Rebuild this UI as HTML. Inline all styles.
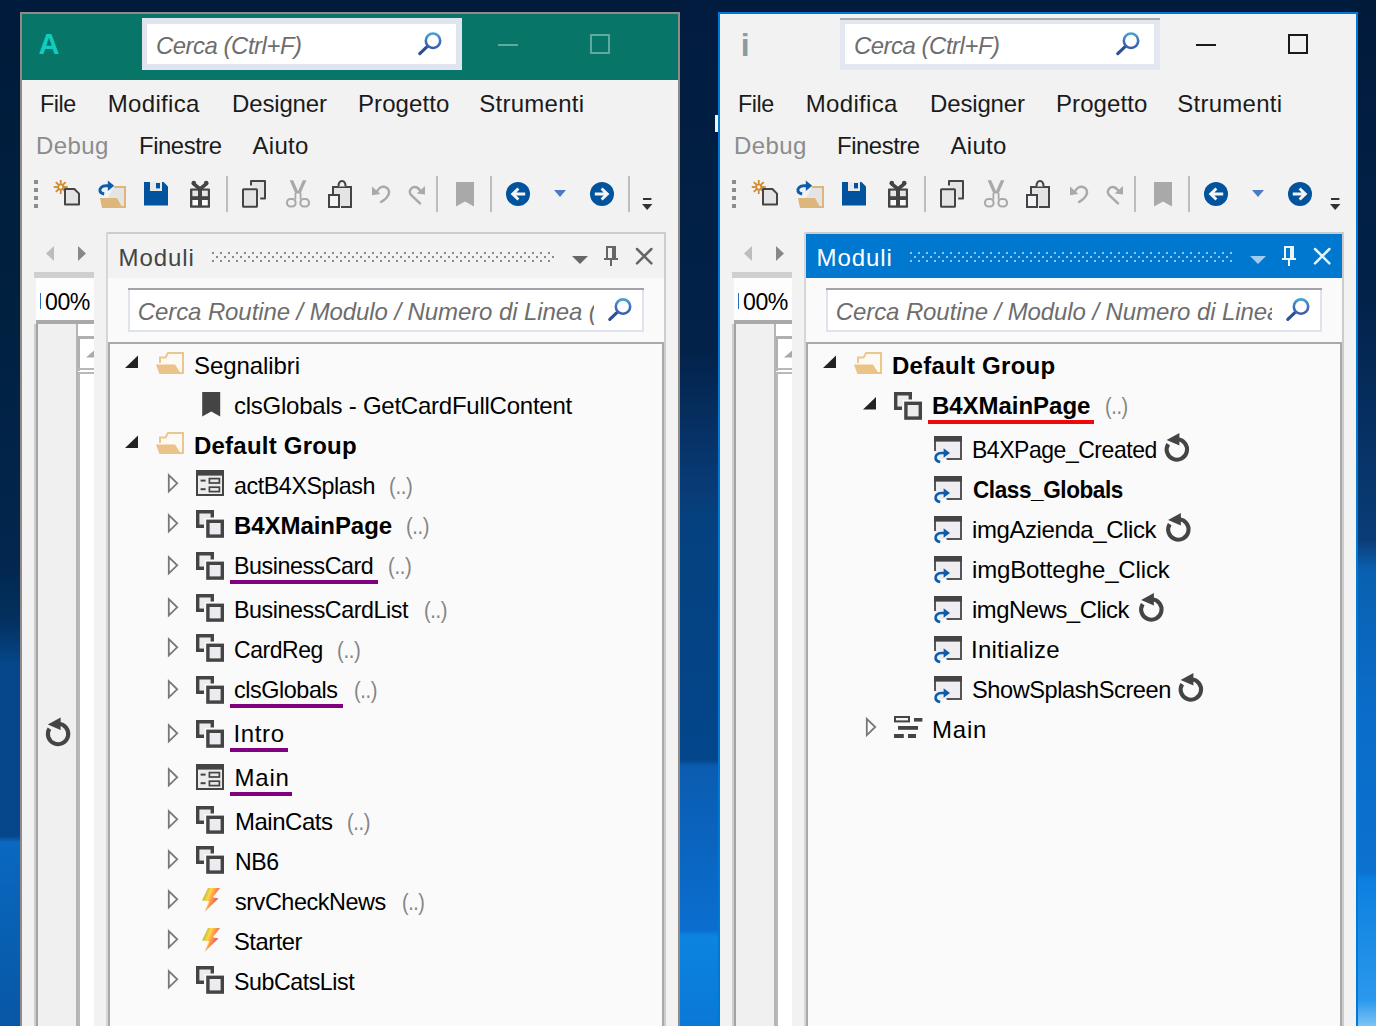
<!DOCTYPE html>
<html><head><meta charset="utf-8"><title>Moduli</title><style>
html,body{margin:0;padding:0}
body{width:1376px;height:1026px;overflow:hidden;position:relative;background:
 linear-gradient(180deg,#001b3b 0,#00203f 300px,#02264e 560px,#03305f 620px,#05478a 664px,#05478a 836px,#0a68c0 842px,#0757a5 1026px) 0 0/20px 1026px no-repeat,
 linear-gradient(180deg,#011c3e 0,#02224a 350px,#083a74 480px,#05417f 520px,#03468b 760px,#0a5cb0 766px,#0a6ed0 930px,#0c84e0 936px,#0a78d8 1026px) 680px 0/38px 1026px no-repeat,
 linear-gradient(180deg,#011a3a 0,#02224a 300px,#0a3d78 540px,#0a60b0 570px,#0a6cc8 700px,#0a72d0 872px,#0c80e0 880px,#2a98ec 1000px,#7cc4f6 1026px) 1358px 0/18px 1026px no-repeat,
 #011b3c;font-family:"Liberation Sans", sans-serif;font-size:24px}
#b div{position:absolute}
.t{position:absolute;white-space:pre;line-height:1;transform-origin:0 0}
svg{position:absolute;overflow:visible}
</style></head>
<body>
<div id="b">
<div style="left:715px;top:115px;width:3px;height:17px;background:#eef6ea;"></div>
<div style="left:20px;top:12px;width:660px;height:1014px;background:#f2f2f2;"></div>
<div style="left:20px;top:12px;width:660px;height:68px;background:#077567;"></div>
<div style="left:20px;top:12px;width:660px;height:2px;background:#918a88;"></div>
<div style="left:20px;top:12px;width:2px;height:1014px;background:#918a88;"></div>
<div style="left:678px;top:12px;width:2px;height:1014px;background:#918a88;"></div>
<div style="left:142px;top:18px;width:320px;height:52px;background:#e0e4ee;"></div>
<div style="left:147px;top:24px;width:309px;height:40px;background:#fff;"></div>
<div style="left:498px;top:44px;width:20px;height:2px;background:#5fa99f;"></div>
<div style="left:590px;top:34px;width:20px;height:20px;background:transparent;border:2px solid #5fa99f;box-sizing:border-box;"></div>
<div style="left:34px;top:180px;width:4px;height:4px;background:#8c8c8c;"></div>
<div style="left:34px;top:188px;width:4px;height:4px;background:#8c8c8c;"></div>
<div style="left:34px;top:196px;width:4px;height:4px;background:#8c8c8c;"></div>
<div style="left:34px;top:204px;width:4px;height:4px;background:#8c8c8c;"></div>
<div style="left:226px;top:176px;width:2px;height:36px;background:#bdbdbd;"></div>
<div style="left:436px;top:176px;width:2px;height:36px;background:#bdbdbd;"></div>
<div style="left:490px;top:176px;width:2px;height:36px;background:#bdbdbd;"></div>
<div style="left:628px;top:176px;width:2px;height:36px;background:#bdbdbd;"></div>
<div style="left:34px;top:272px;width:60px;height:6px;background:#cfcfcf;"></div>
<div style="left:36px;top:278px;width:58px;height:42px;background:#fdfdfd;"></div>
<div style="left:40px;top:293px;width:1px;height:16px;background:#2a6fc0;"></div>
<div style="left:36px;top:320px;width:58px;height:4px;background:#a9a9a9;"></div>
<div style="left:34px;top:324px;width:2px;height:702px;background:#cdcdcd;"></div>
<div style="left:36px;top:324px;width:2px;height:702px;background:#a3a3a3;"></div>
<div style="left:38px;top:324px;width:40px;height:702px;background:#f0f0f0;"></div>
<div style="left:76px;top:324px;width:2px;height:702px;background:#b5b5b5;"></div>
<div style="left:78px;top:324px;width:16px;height:702px;background:#fff;"></div>
<div style="left:78px;top:336px;width:16px;height:3px;background:#b0b0b0;"></div>
<div style="left:78px;top:339px;width:2px;height:32px;background:#b0b0b0;"></div>
<div style="left:78px;top:368px;width:16px;height:2px;background:#b8b8b8;"></div>
<div style="left:78px;top:372px;width:16px;height:2px;background:#b8b8b8;"></div>
<div style="left:78px;top:374px;width:2px;height:652px;background:#b8b8b8;"></div>
<div style="left:106px;top:232px;width:560px;height:794px;background:#fafafa;"></div>
<div style="left:106px;top:232px;width:560px;height:2px;background:#cccccc;"></div>
<div style="left:106px;top:232px;width:2px;height:794px;background:#d6d6d6;"></div>
<div style="left:664px;top:232px;width:2px;height:794px;background:#cccccc;"></div>
<div style="left:108px;top:234px;width:556px;height:44px;background:#f2f2f2;"></div>
<div style="left:128px;top:288px;width:516px;height:44px;background:#dfe3ec;"></div>
<div style="left:128px;top:288px;width:516px;height:2px;background:#a2a2a8;"></div>
<div style="left:130px;top:290px;width:512px;height:40px;background:#fff;"></div>
<div style="left:108px;top:342px;width:556px;height:684px;background:#a9a9a9;"></div>
<div style="left:110px;top:344px;width:552px;height:682px;background:#fafafa;"></div>
<div style="left:718px;top:12px;width:640px;height:1014px;background:#f2f2f2;"></div>
<div style="left:718px;top:12px;width:640px;height:2px;background:#0078d7;"></div>
<div style="left:718px;top:12px;width:2px;height:1014px;background:#0078d7;"></div>
<div style="left:1356px;top:12px;width:2px;height:1014px;background:#0078d7;"></div>
<div style="left:840px;top:18px;width:320px;height:52px;background:#e3e7f0;"></div>
<div style="left:840px;top:18px;width:320px;height:2px;background:#a9a9ad;"></div>
<div style="left:845px;top:24px;width:309px;height:40px;background:#fff;"></div>
<div style="left:1196px;top:44px;width:20px;height:2px;background:#1a1a1a;"></div>
<div style="left:1288px;top:34px;width:20px;height:20px;background:transparent;border:2px solid #1a1a1a;box-sizing:border-box;"></div>
<div style="left:732px;top:180px;width:4px;height:4px;background:#8c8c8c;"></div>
<div style="left:732px;top:188px;width:4px;height:4px;background:#8c8c8c;"></div>
<div style="left:732px;top:196px;width:4px;height:4px;background:#8c8c8c;"></div>
<div style="left:732px;top:204px;width:4px;height:4px;background:#8c8c8c;"></div>
<div style="left:924px;top:176px;width:2px;height:36px;background:#bdbdbd;"></div>
<div style="left:1134px;top:176px;width:2px;height:36px;background:#bdbdbd;"></div>
<div style="left:1188px;top:176px;width:2px;height:36px;background:#bdbdbd;"></div>
<div style="left:732px;top:272px;width:60px;height:6px;background:#cfcfcf;"></div>
<div style="left:734px;top:278px;width:58px;height:42px;background:#fdfdfd;"></div>
<div style="left:738px;top:293px;width:1px;height:16px;background:#2a6fc0;"></div>
<div style="left:734px;top:320px;width:58px;height:4px;background:#a9a9a9;"></div>
<div style="left:732px;top:324px;width:2px;height:702px;background:#cdcdcd;"></div>
<div style="left:734px;top:324px;width:2px;height:702px;background:#a3a3a3;"></div>
<div style="left:736px;top:324px;width:40px;height:702px;background:#f0f0f0;"></div>
<div style="left:774px;top:324px;width:2px;height:702px;background:#b5b5b5;"></div>
<div style="left:776px;top:324px;width:16px;height:702px;background:#fff;"></div>
<div style="left:776px;top:336px;width:16px;height:3px;background:#b0b0b0;"></div>
<div style="left:776px;top:339px;width:2px;height:32px;background:#b0b0b0;"></div>
<div style="left:776px;top:368px;width:16px;height:2px;background:#b8b8b8;"></div>
<div style="left:776px;top:372px;width:16px;height:2px;background:#b8b8b8;"></div>
<div style="left:776px;top:374px;width:2px;height:652px;background:#b8b8b8;"></div>
<div style="left:804px;top:232px;width:540px;height:794px;background:#fafafa;"></div>
<div style="left:804px;top:232px;width:540px;height:2px;background:#cccccc;"></div>
<div style="left:804px;top:232px;width:2px;height:794px;background:#d6d6d6;"></div>
<div style="left:1342px;top:232px;width:2px;height:794px;background:#cccccc;"></div>
<div style="left:806px;top:234px;width:536px;height:44px;background:#0078cf;"></div>
<div style="left:826px;top:288px;width:496px;height:44px;background:#dfe3ec;"></div>
<div style="left:826px;top:288px;width:496px;height:2px;background:#a2a2a8;"></div>
<div style="left:828px;top:290px;width:492px;height:40px;background:#fff;"></div>
<div style="left:806px;top:342px;width:536px;height:684px;background:#a9a9a9;"></div>
<div style="left:808px;top:344px;width:532px;height:682px;background:#fafafa;"></div>
<div style="left:230px;top:580px;width:148px;height:4px;background:#800080;"></div>
<div style="left:230px;top:704px;width:113px;height:4px;background:#800080;"></div>
<div style="left:230px;top:748px;width:58px;height:4px;background:#800080;"></div>
<div style="left:230px;top:792px;width:62px;height:4px;background:#800080;"></div>
<div style="left:928px;top:420px;width:166px;height:4px;background:#ee0a0a;"></div>
</div>
<svg width="1376" height="1026" viewBox="0 0 1376 1026" style="left:0;top:0"><defs><linearGradient id="mg" x1="0" y1="0" x2="0" y2="1"><stop offset="0" stop-color="#4aa0d4"/><stop offset=".55" stop-color="#3f6fbd"/><stop offset="1" stop-color="#3a5cae"/></linearGradient><linearGradient id="bolt" gradientUnits="userSpaceOnUse" x1="0" y1="6" x2="18.6" y2="13.3"><stop offset=".12" stop-color="#bcbc3a"/><stop offset=".34" stop-color="#ffd74c"/><stop offset=".52" stop-color="#ffa244"/><stop offset=".72" stop-color="#f06c60"/><stop offset=".9" stop-color="#9a5654"/></linearGradient></defs><g transform="translate(60.75 187)"><g stroke="#d08a2c" stroke-width="1.8" fill="none"><line x1="0" y1="-3.2" x2="0" y2="-7" transform="rotate(0)"/><line x1="0" y1="-3.2" x2="0" y2="-7" transform="rotate(45)"/><line x1="0" y1="-3.2" x2="0" y2="-7" transform="rotate(90)"/><line x1="0" y1="-3.2" x2="0" y2="-7" transform="rotate(135)"/><line x1="0" y1="-3.2" x2="0" y2="-7" transform="rotate(180)"/><line x1="0" y1="-3.2" x2="0" y2="-7" transform="rotate(225)"/><line x1="0" y1="-3.2" x2="0" y2="-7" transform="rotate(270)"/><line x1="0" y1="-3.2" x2="0" y2="-7" transform="rotate(315)"/><circle r="2.6"/></g></g><g transform="translate(64 188)"><path d="M1 1H10.4L15 5.6V16.6H1Z" fill="#e4e4e4" stroke="#444" stroke-width="2" stroke-linejoin="round"/></g><g transform="translate(98 180)"><path d="M16 7H27V27H5" fill="#e4e4e4" stroke="#dcb67a" stroke-width="2"/><path d="M2 18H19L24.5 28H4Z" fill="#dcb67a"/><path d="M12 5.8H8C3.6 5.8 1.4 8.8 2 11.2C2.4 12.8 3.8 13.6 6.2 14" fill="none" stroke="#0b5cad" stroke-width="2.9"/><path d="M9.8 .6L16.2 5.8 9.8 11Z" fill="#0b5cad"/></g><g transform="translate(144 182)"><path d="M0 0H19.5L24 4.5V23.5H0Z" fill="#00539c"/><rect x="6" y="0" width="12" height="9" fill="#e9e9e9"/><rect x="12" y="1" width="4" height="5.4" fill="#00539c"/></g><g transform="translate(190 180)"><rect x="0" y="8.4" width="20" height="19.4" rx=".8" fill="#444"/><rect x="2.4" y="10.6" width="5.6" height="5.6" fill="#e6e6e6"/><rect x="12" y="10.6" width="5.8" height="5.6" fill="#e6e6e6"/><rect x="2.4" y="20" width="5.6" height="5.4" fill="#fbfbfb"/><rect x="12" y="20" width="5.8" height="5.4" fill="#fbfbfb"/><path d="M10 9L3.4 3.6M10 9L16.6 3.6" stroke="#444" stroke-width="3.6" stroke-linecap="round"/><circle cx="3.8" cy="3" r="2.3" fill="#444"/><circle cx="16.2" cy="3" r="2.3" fill="#444"/></g><g transform="translate(242 180)"><path d="M9 5.6V1H23V18.6H18.2" fill="#e4e4e4" stroke="#444" stroke-width="2" stroke-linejoin="round"/><rect x="1" y="9.2" width="14" height="17.6" rx=".6" fill="#e4e4e4" stroke="#444" stroke-width="2"/></g><g transform="translate(286 180)"><g fill="none" stroke="#a9a9a9" stroke-width="2"><rect x="1" y="19" width="8.6" height="7.6" rx="3.4"/><rect x="14.4" y="19" width="8.6" height="7.6" rx="3.4"/><path d="M9.4 19.4V13M14.6 19.4V13" stroke-width="1.8"/></g><path d="M3.6 .2L7.2 .2 12 11.2 16.8 .2 20.4 .2 14.6 13.6H9.4Z" fill="#a9a9a9"/></g><g transform="translate(328 180)"><path d="M5 14V7H23V27H13" fill="#e4e4e4" stroke="#444" stroke-width="2"/><path d="M10.5 6.5C10.5 2.6 12 1 14 1S17.5 2.6 17.5 6.5" fill="#f2f2f2" stroke="#444" stroke-width="2"/><rect x="1" y="15" width="10" height="12" fill="#f4f4f8" stroke="#444" stroke-width="2"/></g><g transform="translate(371.6 185.4)"><path d="M5 7C6.4 3 9.8 .9 12.6 1.3C16.6 1.9 18.3 5.6 17 9C15.6 12.6 12.6 14.8 9.4 16.6" fill="none" stroke="#a9a9a9" stroke-width="2.5" stroke-linecap="round"/><path d="M.4 1.2V9.8L8.8 8.6Z" fill="#a9a9a9"/></g><g transform="translate(408.5 185.4)"><path d="M12.5 6.6C10.5 2.1 6.5 .6 4 2.1C1 4.1 .5 7.1 2.5 9.6L11.5 18" fill="none" stroke="#a9a9a9" stroke-width="2.5" stroke-linecap="round"/><path d="M16.5 .6V9.1L8.2 8.1Z" fill="#a9a9a9"/></g><g transform="translate(456 182)"><path d="M0 0H18V24.6L9 19.4 0 24.6Z" fill="#a9a9a9"/></g><g transform="translate(518 194)"><circle r="12" fill="#00539c"/><path d="M-7.4 0L-.6-6.4 1.4-4.4-1.6-1.5H7.2V1.5H-1.6L1.4 4.4-.6 6.4Z" fill="#f4f4f4"/></g><g transform="translate(554 190)"><path d="M0 0H12L6 7Z" fill="#4a7ac2"/></g><g transform="translate(602 194)"><circle r="12" fill="#00539c"/><g transform="scale(-1 1)"><path d="M-7.4 0L-.6-6.4 1.4-4.4-1.6-1.5H7.2V1.5H-1.6L1.4 4.4-.6 6.4Z" fill="#f4f4f4"/></g></g><g transform="translate(642 198)"><rect x="1" y="0" width="8.4" height="2" fill="#333"/><path d="M0 6H10.4L5.2 12Z" fill="#333"/></g><g transform="translate(433 40.75)"><line x1="-5.6" y1="5.6" x2="-13.2" y2="12.8" stroke="#2c4f96" stroke-width="3.2" stroke-linecap="round"/><circle r="7.2" fill="#fff" stroke="url(#mg)" stroke-width="2.6"/></g><g transform="translate(46 246)"><path d="M8 0V15L0 7.5Z" fill="#bdbdbd"/></g><g transform="translate(78 246)"><path d="M0 0V15L8 7.5Z" fill="#888"/></g><g transform="translate(86 350.6)"><path d="M8 0V7H0Z" fill="#a9a9a9"/></g><pattern id="dpi" x="212" y="252" width="8" height="8" patternUnits="userSpaceOnUse"><rect width="2" height="2" fill="#8a8a8a"/><rect x="4" y="4" width="2" height="2" fill="#8a8a8a"/></pattern><rect x="212" y="252" width="342" height="10" fill="url(#dpi)"/><g transform="translate(572 256)"><path d="M0 0H16L8 8Z" fill="#666"/></g><g transform="translate(604 246)"><path d="M2 0H12V12H14V14H8V20H6V14H0V12H2ZM4 2V12H8V2Z" fill="#666" fill-opacity="1"/></g><g transform="translate(636 248)"><path d="M1 1L15.4 15.4M15.4 1L1 15.4" stroke="#666" stroke-width="2.5" stroke-linecap="round" stroke-opacity="1"/></g><g transform="translate(623 306.6)"><line x1="-5.6" y1="5.6" x2="-13.2" y2="12.8" stroke="#2c4f96" stroke-width="3.2" stroke-linecap="round"/><circle r="7.2" fill="#fff" stroke="url(#mg)" stroke-width="2.6"/></g><g transform="translate(758.75 187)"><g stroke="#d08a2c" stroke-width="1.8" fill="none"><line x1="0" y1="-3.2" x2="0" y2="-7" transform="rotate(0)"/><line x1="0" y1="-3.2" x2="0" y2="-7" transform="rotate(45)"/><line x1="0" y1="-3.2" x2="0" y2="-7" transform="rotate(90)"/><line x1="0" y1="-3.2" x2="0" y2="-7" transform="rotate(135)"/><line x1="0" y1="-3.2" x2="0" y2="-7" transform="rotate(180)"/><line x1="0" y1="-3.2" x2="0" y2="-7" transform="rotate(225)"/><line x1="0" y1="-3.2" x2="0" y2="-7" transform="rotate(270)"/><line x1="0" y1="-3.2" x2="0" y2="-7" transform="rotate(315)"/><circle r="2.6"/></g></g><g transform="translate(762 188)"><path d="M1 1H10.4L15 5.6V16.6H1Z" fill="#e4e4e4" stroke="#444" stroke-width="2" stroke-linejoin="round"/></g><g transform="translate(796 180)"><path d="M16 7H27V27H5" fill="#e4e4e4" stroke="#dcb67a" stroke-width="2"/><path d="M2 18H19L24.5 28H4Z" fill="#dcb67a"/><path d="M12 5.8H8C3.6 5.8 1.4 8.8 2 11.2C2.4 12.8 3.8 13.6 6.2 14" fill="none" stroke="#0b5cad" stroke-width="2.9"/><path d="M9.8 .6L16.2 5.8 9.8 11Z" fill="#0b5cad"/></g><g transform="translate(842 182)"><path d="M0 0H19.5L24 4.5V23.5H0Z" fill="#00539c"/><rect x="6" y="0" width="12" height="9" fill="#e9e9e9"/><rect x="12" y="1" width="4" height="5.4" fill="#00539c"/></g><g transform="translate(888 180)"><rect x="0" y="8.4" width="20" height="19.4" rx=".8" fill="#444"/><rect x="2.4" y="10.6" width="5.6" height="5.6" fill="#e6e6e6"/><rect x="12" y="10.6" width="5.8" height="5.6" fill="#e6e6e6"/><rect x="2.4" y="20" width="5.6" height="5.4" fill="#fbfbfb"/><rect x="12" y="20" width="5.8" height="5.4" fill="#fbfbfb"/><path d="M10 9L3.4 3.6M10 9L16.6 3.6" stroke="#444" stroke-width="3.6" stroke-linecap="round"/><circle cx="3.8" cy="3" r="2.3" fill="#444"/><circle cx="16.2" cy="3" r="2.3" fill="#444"/></g><g transform="translate(940 180)"><path d="M9 5.6V1H23V18.6H18.2" fill="#e4e4e4" stroke="#444" stroke-width="2" stroke-linejoin="round"/><rect x="1" y="9.2" width="14" height="17.6" rx=".6" fill="#e4e4e4" stroke="#444" stroke-width="2"/></g><g transform="translate(984 180)"><g fill="none" stroke="#a9a9a9" stroke-width="2"><rect x="1" y="19" width="8.6" height="7.6" rx="3.4"/><rect x="14.4" y="19" width="8.6" height="7.6" rx="3.4"/><path d="M9.4 19.4V13M14.6 19.4V13" stroke-width="1.8"/></g><path d="M3.6 .2L7.2 .2 12 11.2 16.8 .2 20.4 .2 14.6 13.6H9.4Z" fill="#a9a9a9"/></g><g transform="translate(1026 180)"><path d="M5 14V7H23V27H13" fill="#e4e4e4" stroke="#444" stroke-width="2"/><path d="M10.5 6.5C10.5 2.6 12 1 14 1S17.5 2.6 17.5 6.5" fill="#f2f2f2" stroke="#444" stroke-width="2"/><rect x="1" y="15" width="10" height="12" fill="#f4f4f8" stroke="#444" stroke-width="2"/></g><g transform="translate(1069.6 185.4)"><path d="M5 7C6.4 3 9.8 .9 12.6 1.3C16.6 1.9 18.3 5.6 17 9C15.6 12.6 12.6 14.8 9.4 16.6" fill="none" stroke="#a9a9a9" stroke-width="2.5" stroke-linecap="round"/><path d="M.4 1.2V9.8L8.8 8.6Z" fill="#a9a9a9"/></g><g transform="translate(1106.5 185.4)"><path d="M12.5 6.6C10.5 2.1 6.5 .6 4 2.1C1 4.1 .5 7.1 2.5 9.6L11.5 18" fill="none" stroke="#a9a9a9" stroke-width="2.5" stroke-linecap="round"/><path d="M16.5 .6V9.1L8.2 8.1Z" fill="#a9a9a9"/></g><g transform="translate(1154 182)"><path d="M0 0H18V24.6L9 19.4 0 24.6Z" fill="#a9a9a9"/></g><g transform="translate(1216 194)"><circle r="12" fill="#00539c"/><path d="M-7.4 0L-.6-6.4 1.4-4.4-1.6-1.5H7.2V1.5H-1.6L1.4 4.4-.6 6.4Z" fill="#f4f4f4"/></g><g transform="translate(1252 190)"><path d="M0 0H12L6 7Z" fill="#4a7ac2"/></g><g transform="translate(1300 194)"><circle r="12" fill="#00539c"/><g transform="scale(-1 1)"><path d="M-7.4 0L-.6-6.4 1.4-4.4-1.6-1.5H7.2V1.5H-1.6L1.4 4.4-.6 6.4Z" fill="#f4f4f4"/></g></g><g transform="translate(1330 198)"><rect x="1" y="0" width="8.4" height="2" fill="#333"/><path d="M0 6H10.4L5.2 12Z" fill="#333"/></g><g transform="translate(1131 40.75)"><line x1="-5.6" y1="5.6" x2="-13.2" y2="12.8" stroke="#2c4f96" stroke-width="3.2" stroke-linecap="round"/><circle r="7.2" fill="#fff" stroke="url(#mg)" stroke-width="2.6"/></g><g transform="translate(744 246)"><path d="M8 0V15L0 7.5Z" fill="#bdbdbd"/></g><g transform="translate(776 246)"><path d="M0 0V15L8 7.5Z" fill="#888"/></g><g transform="translate(784 350.6)"><path d="M8 0V7H0Z" fill="#a9a9a9"/></g><pattern id="dpa" x="910" y="252" width="8" height="8" patternUnits="userSpaceOnUse"><rect width="2" height="2" fill="#8fc4ee"/><rect x="4" y="4" width="2" height="2" fill="#8fc4ee"/></pattern><rect x="910" y="252" width="322" height="10" fill="url(#dpa)"/><g transform="translate(1250 256)"><path d="M0 0H16L8 8Z" fill="#9fcdf0"/></g><g transform="translate(1282 246)"><path d="M2 0H12V12H14V14H8V20H6V14H0V12H2ZM4 2V12H8V2Z" fill="#fff" fill-opacity="0.92"/></g><g transform="translate(1314 248)"><path d="M1 1L15.4 15.4M15.4 1L1 15.4" stroke="#fff" stroke-width="2.5" stroke-linecap="round" stroke-opacity="0.9"/></g><g transform="translate(1301 306.6)"><line x1="-5.6" y1="5.6" x2="-13.2" y2="12.8" stroke="#2c4f96" stroke-width="3.2" stroke-linecap="round"/><circle r="7.2" fill="#fff" stroke="url(#mg)" stroke-width="2.6"/></g><g transform="translate(125 355.5)"><path d="M13 0V12.5H0Z" fill="#222"/></g><g transform="translate(156 352)"><path d="M4 11V5.4L9.6 5.4 12 1H27V21H24" fill="#fdfaf3" stroke="#e9c78f" stroke-width="2" stroke-linejoin="miter"/><path d="M0 12.6H19L25 22H3.4Z" fill="#e9c387"/></g><g transform="translate(202.2 392)"><path d="M0 0H18V24.6L9 19.6 0 24.6Z" fill="#444"/></g><g transform="translate(125 435.5)"><path d="M13 0V12.5H0Z" fill="#222"/></g><g transform="translate(156 432)"><path d="M4 11V5.4L9.6 5.4 12 1H27V21H24" fill="#fdfaf3" stroke="#e9c78f" stroke-width="2" stroke-linejoin="miter"/><path d="M0 12.6H19L25 22H3.4Z" fill="#e9c387"/></g><g transform="translate(168 473.6)"><path d="M.8 1.6L9.2 9.7.8 17.8Z" fill="#fcfcfc" stroke="#787878" stroke-width="1.8" stroke-linejoin="miter"/></g><g transform="translate(196 470)"><rect x="1" y="1" width="26" height="24" fill="#ececec" stroke="#444" stroke-width="2"/><rect x="0" y="0" width="28" height="5.6" fill="#444"/><rect x="4.6" y="9.6" width="5" height="2" fill="#444"/><rect x="13.4" y="8.6" width="10" height="4.4" fill="#e9e9e9" stroke="#444" stroke-width="1.7"/><rect x="4.6" y="18.2" width="5" height="2" fill="#444"/><rect x="13.4" y="17.2" width="10" height="4.4" fill="#e9e9e9" stroke="#444" stroke-width="1.7"/></g><g transform="translate(168 513.5999999999999)"><path d="M.8 1.6L9.2 9.7.8 17.8Z" fill="#fcfcfc" stroke="#787878" stroke-width="1.8" stroke-linejoin="miter"/></g><g transform="translate(196 510)"><path d="M3 3H15V8H8.6V14.6H3Z" fill="#ececec"/><path d="M8 16.2H1.7V1.7H16.3V7.4" fill="none" stroke="#444" stroke-width="3.4"/><rect x="11.9" y="11.3" width="14.4" height="14.8" fill="#ececf0" stroke="#444" stroke-width="3.4"/></g><g transform="translate(168 555.5999999999999)"><path d="M.8 1.6L9.2 9.7.8 17.8Z" fill="#fcfcfc" stroke="#787878" stroke-width="1.8" stroke-linejoin="miter"/></g><g transform="translate(196 552)"><path d="M3 3H15V8H8.6V14.6H3Z" fill="#ececec"/><path d="M8 16.2H1.7V1.7H16.3V7.4" fill="none" stroke="#444" stroke-width="3.4"/><rect x="11.9" y="11.3" width="14.4" height="14.8" fill="#ececf0" stroke="#444" stroke-width="3.4"/></g><g transform="translate(168 597.5999999999999)"><path d="M.8 1.6L9.2 9.7.8 17.8Z" fill="#fcfcfc" stroke="#787878" stroke-width="1.8" stroke-linejoin="miter"/></g><g transform="translate(196 594)"><path d="M3 3H15V8H8.6V14.6H3Z" fill="#ececec"/><path d="M8 16.2H1.7V1.7H16.3V7.4" fill="none" stroke="#444" stroke-width="3.4"/><rect x="11.9" y="11.3" width="14.4" height="14.8" fill="#ececf0" stroke="#444" stroke-width="3.4"/></g><g transform="translate(168 637.5999999999999)"><path d="M.8 1.6L9.2 9.7.8 17.8Z" fill="#fcfcfc" stroke="#787878" stroke-width="1.8" stroke-linejoin="miter"/></g><g transform="translate(196 634)"><path d="M3 3H15V8H8.6V14.6H3Z" fill="#ececec"/><path d="M8 16.2H1.7V1.7H16.3V7.4" fill="none" stroke="#444" stroke-width="3.4"/><rect x="11.9" y="11.3" width="14.4" height="14.8" fill="#ececf0" stroke="#444" stroke-width="3.4"/></g><g transform="translate(168 679.5999999999999)"><path d="M.8 1.6L9.2 9.7.8 17.8Z" fill="#fcfcfc" stroke="#787878" stroke-width="1.8" stroke-linejoin="miter"/></g><g transform="translate(196 676)"><path d="M3 3H15V8H8.6V14.6H3Z" fill="#ececec"/><path d="M8 16.2H1.7V1.7H16.3V7.4" fill="none" stroke="#444" stroke-width="3.4"/><rect x="11.9" y="11.3" width="14.4" height="14.8" fill="#ececf0" stroke="#444" stroke-width="3.4"/></g><g transform="translate(168 723.5999999999999)"><path d="M.8 1.6L9.2 9.7.8 17.8Z" fill="#fcfcfc" stroke="#787878" stroke-width="1.8" stroke-linejoin="miter"/></g><g transform="translate(196 720)"><path d="M3 3H15V8H8.6V14.6H3Z" fill="#ececec"/><path d="M8 16.2H1.7V1.7H16.3V7.4" fill="none" stroke="#444" stroke-width="3.4"/><rect x="11.9" y="11.3" width="14.4" height="14.8" fill="#ececf0" stroke="#444" stroke-width="3.4"/></g><g transform="translate(168 767.5999999999999)"><path d="M.8 1.6L9.2 9.7.8 17.8Z" fill="#fcfcfc" stroke="#787878" stroke-width="1.8" stroke-linejoin="miter"/></g><g transform="translate(196 764)"><rect x="1" y="1" width="26" height="24" fill="#ececec" stroke="#444" stroke-width="2"/><rect x="0" y="0" width="28" height="5.6" fill="#444"/><rect x="4.6" y="9.6" width="5" height="2" fill="#444"/><rect x="13.4" y="8.6" width="10" height="4.4" fill="#e9e9e9" stroke="#444" stroke-width="1.7"/><rect x="4.6" y="18.2" width="5" height="2" fill="#444"/><rect x="13.4" y="17.2" width="10" height="4.4" fill="#e9e9e9" stroke="#444" stroke-width="1.7"/></g><g transform="translate(168 809.5999999999999)"><path d="M.8 1.6L9.2 9.7.8 17.8Z" fill="#fcfcfc" stroke="#787878" stroke-width="1.8" stroke-linejoin="miter"/></g><g transform="translate(196 806)"><path d="M3 3H15V8H8.6V14.6H3Z" fill="#ececec"/><path d="M8 16.2H1.7V1.7H16.3V7.4" fill="none" stroke="#444" stroke-width="3.4"/><rect x="11.9" y="11.3" width="14.4" height="14.8" fill="#ececf0" stroke="#444" stroke-width="3.4"/></g><g transform="translate(168 849.5999999999999)"><path d="M.8 1.6L9.2 9.7.8 17.8Z" fill="#fcfcfc" stroke="#787878" stroke-width="1.8" stroke-linejoin="miter"/></g><g transform="translate(196 846)"><path d="M3 3H15V8H8.6V14.6H3Z" fill="#ececec"/><path d="M8 16.2H1.7V1.7H16.3V7.4" fill="none" stroke="#444" stroke-width="3.4"/><rect x="11.9" y="11.3" width="14.4" height="14.8" fill="#ececf0" stroke="#444" stroke-width="3.4"/></g><g transform="translate(168 889.5999999999999)"><path d="M.8 1.6L9.2 9.7.8 17.8Z" fill="#fcfcfc" stroke="#787878" stroke-width="1.8" stroke-linejoin="miter"/></g><g transform="translate(202 888)"><path d="M6 0H18L10.8 9.2 16.4 10.4 2.6 24 7.2 13.2 0 12.4Z" fill="url(#bolt)"/></g><g transform="translate(168 929.5999999999999)"><path d="M.8 1.6L9.2 9.7.8 17.8Z" fill="#fcfcfc" stroke="#787878" stroke-width="1.8" stroke-linejoin="miter"/></g><g transform="translate(202 928)"><path d="M6 0H18L10.8 9.2 16.4 10.4 2.6 24 7.2 13.2 0 12.4Z" fill="url(#bolt)"/></g><g transform="translate(168 969.5999999999999)"><path d="M.8 1.6L9.2 9.7.8 17.8Z" fill="#fcfcfc" stroke="#787878" stroke-width="1.8" stroke-linejoin="miter"/></g><g transform="translate(196 966)"><path d="M3 3H15V8H8.6V14.6H3Z" fill="#ececec"/><path d="M8 16.2H1.7V1.7H16.3V7.4" fill="none" stroke="#444" stroke-width="3.4"/><rect x="11.9" y="11.3" width="14.4" height="14.8" fill="#ececf0" stroke="#444" stroke-width="3.4"/></g><g transform="translate(58 734)"><path d="M-8.6-5.4A10.2 10.2 0 1 0 .5-10.2" fill="none" stroke="#444" stroke-width="4.1"/><path d="M2.6-16.4L-10.2-9.6 2.6-4Z" fill="#444"/></g><g transform="translate(823 355.5)"><path d="M13 0V12.5H0Z" fill="#222"/></g><g transform="translate(854 352)"><path d="M4 11V5.4L9.6 5.4 12 1H27V21H24" fill="#fdfaf3" stroke="#e9c78f" stroke-width="2" stroke-linejoin="miter"/><path d="M0 12.6H19L25 22H3.4Z" fill="#e9c387"/></g><g transform="translate(863 397)"><path d="M13 0V12.5H0Z" fill="#222"/></g><g transform="translate(894 392)"><path d="M3 3H15V8H8.6V14.6H3Z" fill="#ececec"/><path d="M8 16.2H1.7V1.7H16.3V7.4" fill="none" stroke="#444" stroke-width="3.4"/><rect x="11.9" y="11.3" width="14.4" height="14.8" fill="#ececf0" stroke="#444" stroke-width="3.4"/></g><g transform="translate(934 436.0)"><rect x="1" y="1" width="26" height="22" fill="#eeeef2"/><path d="M1 15V1H27V23H12.6" fill="none" stroke="#555" stroke-width="2"/><rect x="0" y="0" width="28" height="5.6" fill="#444"/><path d="M13 17H7.4C3.2 17 1 20 1.6 22.6C2 24.4 3.6 25.4 6.2 26" fill="none" stroke="#0b5cad" stroke-width="2.7"/><path d="M9.6 12.2L16 17 9.6 21.8Z" fill="#0b5cad"/></g><g transform="translate(1176.8 449.5)"><path d="M-8.6-5.4A10.2 10.2 0 1 0 .5-10.2" fill="none" stroke="#444" stroke-width="4.1"/><path d="M2.6-16.4L-10.2-9.6 2.6-4Z" fill="#444"/></g><g transform="translate(934 476.0)"><rect x="1" y="1" width="26" height="22" fill="#eeeef2"/><path d="M1 15V1H27V23H12.6" fill="none" stroke="#555" stroke-width="2"/><rect x="0" y="0" width="28" height="5.6" fill="#444"/><path d="M13 17H7.4C3.2 17 1 20 1.6 22.6C2 24.4 3.6 25.4 6.2 26" fill="none" stroke="#0b5cad" stroke-width="2.7"/><path d="M9.6 12.2L16 17 9.6 21.8Z" fill="#0b5cad"/></g><g transform="translate(934 516.0)"><rect x="1" y="1" width="26" height="22" fill="#eeeef2"/><path d="M1 15V1H27V23H12.6" fill="none" stroke="#555" stroke-width="2"/><rect x="0" y="0" width="28" height="5.6" fill="#444"/><path d="M13 17H7.4C3.2 17 1 20 1.6 22.6C2 24.4 3.6 25.4 6.2 26" fill="none" stroke="#0b5cad" stroke-width="2.7"/><path d="M9.6 12.2L16 17 9.6 21.8Z" fill="#0b5cad"/></g><g transform="translate(1178.3 529.5)"><path d="M-8.6-5.4A10.2 10.2 0 1 0 .5-10.2" fill="none" stroke="#444" stroke-width="4.1"/><path d="M2.6-16.4L-10.2-9.6 2.6-4Z" fill="#444"/></g><g transform="translate(934 556.0)"><rect x="1" y="1" width="26" height="22" fill="#eeeef2"/><path d="M1 15V1H27V23H12.6" fill="none" stroke="#555" stroke-width="2"/><rect x="0" y="0" width="28" height="5.6" fill="#444"/><path d="M13 17H7.4C3.2 17 1 20 1.6 22.6C2 24.4 3.6 25.4 6.2 26" fill="none" stroke="#0b5cad" stroke-width="2.7"/><path d="M9.6 12.2L16 17 9.6 21.8Z" fill="#0b5cad"/></g><g transform="translate(934 596.0)"><rect x="1" y="1" width="26" height="22" fill="#eeeef2"/><path d="M1 15V1H27V23H12.6" fill="none" stroke="#555" stroke-width="2"/><rect x="0" y="0" width="28" height="5.6" fill="#444"/><path d="M13 17H7.4C3.2 17 1 20 1.6 22.6C2 24.4 3.6 25.4 6.2 26" fill="none" stroke="#0b5cad" stroke-width="2.7"/><path d="M9.6 12.2L16 17 9.6 21.8Z" fill="#0b5cad"/></g><g transform="translate(1151.3 609.5)"><path d="M-8.6-5.4A10.2 10.2 0 1 0 .5-10.2" fill="none" stroke="#444" stroke-width="4.1"/><path d="M2.6-16.4L-10.2-9.6 2.6-4Z" fill="#444"/></g><g transform="translate(934 636.0)"><rect x="1" y="1" width="26" height="22" fill="#eeeef2"/><path d="M1 15V1H27V23H12.6" fill="none" stroke="#555" stroke-width="2"/><rect x="0" y="0" width="28" height="5.6" fill="#444"/><path d="M13 17H7.4C3.2 17 1 20 1.6 22.6C2 24.4 3.6 25.4 6.2 26" fill="none" stroke="#0b5cad" stroke-width="2.7"/><path d="M9.6 12.2L16 17 9.6 21.8Z" fill="#0b5cad"/></g><g transform="translate(934 676.0)"><rect x="1" y="1" width="26" height="22" fill="#eeeef2"/><path d="M1 15V1H27V23H12.6" fill="none" stroke="#555" stroke-width="2"/><rect x="0" y="0" width="28" height="5.6" fill="#444"/><path d="M13 17H7.4C3.2 17 1 20 1.6 22.6C2 24.4 3.6 25.4 6.2 26" fill="none" stroke="#0b5cad" stroke-width="2.7"/><path d="M9.6 12.2L16 17 9.6 21.8Z" fill="#0b5cad"/></g><g transform="translate(1190.8 689.5)"><path d="M-8.6-5.4A10.2 10.2 0 1 0 .5-10.2" fill="none" stroke="#444" stroke-width="4.1"/><path d="M2.6-16.4L-10.2-9.6 2.6-4Z" fill="#444"/></g><g transform="translate(866 717.3)"><path d="M.8 1.6L9.2 9.7.8 17.8Z" fill="#fcfcfc" stroke="#787878" stroke-width="1.8" stroke-linejoin="miter"/></g><g transform="translate(894 716)"><rect x="1" y="1" width="14" height="4.4" fill="#f6f6f6" stroke="#444" stroke-width="2"/><rect x="20" y="2" width="8.4" height="3.6" fill="#444"/><rect x="4" y="10" width="20" height="3.8" fill="#444"/><rect x="0" y="18" width="9.8" height="4" fill="#444"/><rect x="14" y="18" width="8" height="4" fill="#444"/></g></svg>
<div style="position:absolute;left:130px;top:290px;width:464px;height:40px;overflow:hidden"><span class="t" style="left:7.75px;top:9.50px;letter-spacing:-0.093px;color:#6d6d6d;font-style:italic">Cerca Routine / Modulo / Numero di Linea (</span></div>
<div style="position:absolute;left:828px;top:290px;width:444px;height:40px;overflow:hidden"><span class="t" style="left:7.75px;top:9.50px;letter-spacing:-0.093px;color:#6d6d6d;font-style:italic">Cerca Routine / Modulo / Numero di Linea (</span></div>
<span class="t" style="left:156.01px;top:33.50px;letter-spacing:-0.450px;color:#6d6d6d;transform:scaleX(0.9943);font-style:italic;">Cerca (Ctrl+F)</span>
<span class="t" style="left:40.28px;top:91.50px;letter-spacing:-0.450px;color:#1b1b1b;transform:scaleX(0.9729);">File</span>
<span class="t" style="left:107.75px;top:91.50px;letter-spacing:0.319px;color:#1b1b1b;">Modifica</span>
<span class="t" style="left:232.00px;top:91.50px;letter-spacing:-0.151px;color:#1b1b1b;">Designer</span>
<span class="t" style="left:358.00px;top:91.50px;letter-spacing:0.089px;color:#1b1b1b;">Progetto</span>
<span class="t" style="left:479.25px;top:91.50px;letter-spacing:0.266px;color:#1b1b1b;">Strumenti</span>
<span class="t" style="left:36.00px;top:133.75px;letter-spacing:0.406px;color:#8c8c8c;">Debug</span>
<span class="t" style="left:138.51px;top:133.75px;letter-spacing:-0.450px;color:#1b1b1b;transform:scaleX(0.9946);">Finestre</span>
<span class="t" style="left:252.50px;top:133.75px;letter-spacing:0.286px;color:#1b1b1b;">Aiuto</span>
<span class="t" style="left:118.50px;top:245.50px;letter-spacing:0.927px;color:#444;">Moduli</span>
<span class="t" style="left:45.00px;top:290.00px;letter-spacing:-0.450px;color:#000;transform:scaleX(0.9616);">00%</span>
<span class="t" style="left:854.01px;top:33.50px;letter-spacing:-0.450px;color:#6d6d6d;transform:scaleX(0.9943);font-style:italic;">Cerca (Ctrl+F)</span>
<span class="t" style="left:738.28px;top:91.50px;letter-spacing:-0.450px;color:#1b1b1b;transform:scaleX(0.9729);">File</span>
<span class="t" style="left:805.75px;top:91.50px;letter-spacing:0.319px;color:#1b1b1b;">Modifica</span>
<span class="t" style="left:930.00px;top:91.50px;letter-spacing:-0.151px;color:#1b1b1b;">Designer</span>
<span class="t" style="left:1056.00px;top:91.50px;letter-spacing:0.089px;color:#1b1b1b;">Progetto</span>
<span class="t" style="left:1177.25px;top:91.50px;letter-spacing:0.266px;color:#1b1b1b;">Strumenti</span>
<span class="t" style="left:734.00px;top:133.75px;letter-spacing:0.406px;color:#8c8c8c;">Debug</span>
<span class="t" style="left:836.51px;top:133.75px;letter-spacing:-0.450px;color:#1b1b1b;transform:scaleX(0.9946);">Finestre</span>
<span class="t" style="left:950.50px;top:133.75px;letter-spacing:0.286px;color:#1b1b1b;">Aiuto</span>
<span class="t" style="left:816.50px;top:245.50px;letter-spacing:0.927px;color:#fff;">Moduli</span>
<span class="t" style="left:743.00px;top:290.00px;letter-spacing:-0.450px;color:#000;transform:scaleX(0.9616);">00%</span>
<span class="t" style="left:38.60px;top:29.65px;letter-spacing:0.000px;color:#10cdbf;font-weight:700;font-size:29px;">A</span>
<span class="t" style="left:740.70px;top:28.90px;letter-spacing:0.000px;color:#8b9ca1;font-weight:700;font-size:32px;">i</span>
<span class="t" style="left:194.00px;top:354.00px;letter-spacing:-0.072px;color:#000;">Segnalibri</span>
<span class="t" style="left:234.00px;top:394.00px;letter-spacing:-0.243px;color:#000;">clsGlobals - GetCardFullContent</span>
<span class="t" style="left:194.00px;top:434.00px;letter-spacing:0.222px;color:#000;font-weight:700;">Default Group</span>
<span class="t" style="left:234.03px;top:474.00px;letter-spacing:-0.450px;color:#000;transform:scaleX(0.9706);">actB4XSplash</span>
<span class="t" style="left:389.15px;top:474.00px;letter-spacing:-0.450px;color:#858585;transform:scaleX(0.8469);">(..)</span>
<span class="t" style="left:234.00px;top:514.00px;letter-spacing:-0.062px;color:#000;font-weight:700;">B4XMainPage</span>
<span class="t" style="left:406.16px;top:514.00px;letter-spacing:-0.450px;color:#858585;transform:scaleX(0.8372);">(..)</span>
<span class="t" style="left:234.03px;top:553.50px;letter-spacing:-0.450px;color:#000;transform:scaleX(0.9676);">BusinessCard</span>
<span class="t" style="left:388.15px;top:553.50px;letter-spacing:-0.450px;color:#858585;transform:scaleX(0.8469);">(..)</span>
<span class="t" style="left:234.03px;top:597.50px;letter-spacing:-0.450px;color:#000;transform:scaleX(0.9689);">BusinessCardList</span>
<span class="t" style="left:423.66px;top:597.50px;letter-spacing:-0.450px;color:#858585;transform:scaleX(0.8372);">(..)</span>
<span class="t" style="left:234.04px;top:637.50px;letter-spacing:-0.450px;color:#000;transform:scaleX(0.9561);">CardReg</span>
<span class="t" style="left:337.15px;top:637.50px;letter-spacing:-0.450px;color:#858585;transform:scaleX(0.8469);">(..)</span>
<span class="t" style="left:234.03px;top:677.50px;letter-spacing:-0.450px;color:#000;transform:scaleX(0.9749);">clsGlobals</span>
<span class="t" style="left:353.66px;top:677.50px;letter-spacing:-0.450px;color:#858585;transform:scaleX(0.8372);">(..)</span>
<span class="t" style="left:233.50px;top:722.00px;letter-spacing:0.644px;color:#000;">Intro</span>
<span class="t" style="left:234.50px;top:766.00px;letter-spacing:0.776px;color:#000;">Main</span>
<span class="t" style="left:234.50px;top:810.00px;letter-spacing:-0.450px;color:#000;transform:scaleX(0.9978);">MainCats</span>
<span class="t" style="left:347.41px;top:810.00px;letter-spacing:-0.450px;color:#858585;transform:scaleX(0.8372);">(..)</span>
<span class="t" style="left:234.54px;top:850.00px;letter-spacing:-0.450px;color:#000;transform:scaleX(0.9620);">NB6</span>
<span class="t" style="left:235.00px;top:890.00px;letter-spacing:-0.450px;color:#000;transform:scaleX(0.9753);">srvCheckNews</span>
<span class="t" style="left:401.68px;top:890.00px;letter-spacing:-0.450px;color:#858585;transform:scaleX(0.8180);">(..)</span>
<span class="t" style="left:234.01px;top:930.00px;letter-spacing:-0.450px;color:#000;transform:scaleX(0.9878);">Starter</span>
<span class="t" style="left:234.03px;top:970.00px;letter-spacing:-0.450px;color:#000;transform:scaleX(0.9659);">SubCatsList</span>
<span class="t" style="left:892.00px;top:354.00px;letter-spacing:0.264px;color:#000;font-weight:700;">Default Group</span>
<span class="t" style="left:932.00px;top:394.00px;letter-spacing:-0.037px;color:#000;font-weight:700;">B4XMainPage</span>
<span class="t" style="left:1104.67px;top:394.00px;letter-spacing:-0.450px;color:#858585;transform:scaleX(0.8276);">(..)</span>
<span class="t" style="left:972.04px;top:438.00px;letter-spacing:-0.450px;color:#000;transform:scaleX(0.9556);">B4XPage_Created</span>
<span class="t" style="left:973.00px;top:478.00px;letter-spacing:-0.450px;color:#000;transform:scaleX(0.9395);font-weight:700;">Class_Globals</span>
<span class="t" style="left:972.00px;top:518.00px;letter-spacing:-0.416px;color:#000;">imgAzienda_Click</span>
<span class="t" style="left:972.00px;top:558.00px;letter-spacing:-0.147px;color:#000;">imgBotteghe_Click</span>
<span class="t" style="left:972.01px;top:598.00px;letter-spacing:-0.450px;color:#000;transform:scaleX(0.9929);">imgNews_Click</span>
<span class="t" style="left:971.00px;top:638.00px;letter-spacing:0.210px;color:#000;">Initialize</span>
<span class="t" style="left:972.02px;top:678.00px;letter-spacing:-0.450px;color:#000;transform:scaleX(0.9832);">ShowSplashScreen</span>
<span class="t" style="left:932.00px;top:718.00px;letter-spacing:0.776px;color:#000;">Main</span>
</body></html>
